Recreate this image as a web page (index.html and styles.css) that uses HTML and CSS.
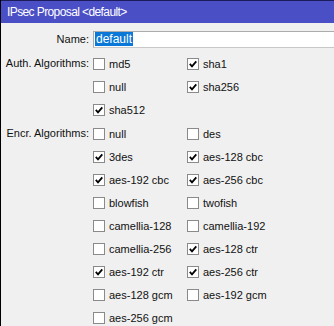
FILE: index.html
```html
<!DOCTYPE html>
<html lang="en">
<head>
    <meta charset="UTF-8">
    <meta name="viewport" content="width=device-width, initial-scale=1.0">
    <title>IPsec Proposal</title>
    <link rel="stylesheet" href="styles.css">
</head>
<body>
    <div class="window">
        <div class="titlebar">IPsec Proposal &lt;default&gt;</div>
        <div class="content">
            <div class="row name-row">
                <label class="label" for="name">Name:</label>
                <div class="name-field"><span class="selected">default</span></div>
            </div>

            <div class="row">
                <div class="label">Auth. Algorithms:</div>
                <div class="options">
                    <div class="opt"><span class="box"></span>md5</div>
                    <div class="opt"><span class="box on"></span>sha1</div>
                    <div class="opt"><span class="box"></span>null</div>
                    <div class="opt"><span class="box on"></span>sha256</div>
                    <div class="opt"><span class="box on"></span>sha512</div>
                </div>
            </div>

            <div class="row encr">
                <div class="label">Encr. Algorithms:</div>
                <div class="options">
                    <div class="opt"><span class="box"></span>null</div>
                    <div class="opt"><span class="box"></span>des</div>
                    <div class="opt"><span class="box on"></span>3des</div>
                    <div class="opt"><span class="box on"></span>aes-128 cbc</div>
                    <div class="opt"><span class="box on"></span>aes-192 cbc</div>
                    <div class="opt"><span class="box on"></span>aes-256 cbc</div>
                    <div class="opt"><span class="box"></span>blowfish</div>
                    <div class="opt"><span class="box"></span>twofish</div>
                    <div class="opt"><span class="box"></span>camellia-128</div>
                    <div class="opt"><span class="box"></span>camellia-192</div>
                    <div class="opt"><span class="box"></span>camellia-256</div>
                    <div class="opt"><span class="box on"></span>aes-128 ctr</div>
                    <div class="opt"><span class="box on"></span>aes-192 ctr</div>
                    <div class="opt"><span class="box on"></span>aes-256 ctr</div>
                    <div class="opt"><span class="box"></span>aes-128 gcm</div>
                    <div class="opt"><span class="box"></span>aes-192 gcm</div>
                    <div class="opt"><span class="box"></span>aes-256 gcm</div>
                </div>
            </div>
        </div>
    </div>
</body>
</html>
```

FILE: styles.css
```css
body {
    margin: 0;
    background-color: #f0f0f0;
    font-family: "Liberation Sans", Arial, sans-serif;
    font-size: 11px;
    color: #111;
    overflow: hidden;
}

.window {
    border-left: 1px solid #000;
    height: 100vh;
}

.titlebar {
    height: 22px;
    line-height: 22px;
    border-top: 1px solid #1c1c5a;
    background-color: #4b4fc6;
    color: #fff;
    padding-left: 6px;
    font-size: 12px;
    letter-spacing: -0.6px;
}

.content {
    padding-top: 5px;
}

.row {
    display: grid;
    grid-template-columns: 88px 1fr;
    column-gap: 4px;
}

.label {
    text-align: right;
    height: 23px;
    line-height: 23px;
}

.name-row .label {
    height: 24px;
    line-height: 23px;
}

.name-field {
    height: 15px;
    margin-top: 3px;
    margin-right: -4px;
    background-color: #fff;
    border: 1px solid #acacac;
    border-bottom-color: #c8c8c8;
    padding-left: 1px;
    line-height: 15px;
}

.selected {
    background-color: #0a78d7;
    color: #fff;
    padding: 0 1px;
    font-size: 12px;
}

.encr {
    margin-top: 1px;
}

.options {
    display: grid;
    grid-template-columns: 94px 1fr;
    grid-auto-rows: 23px;
}

.opt {
    display: flex;
    align-items: center;
    gap: 4px;
    white-space: nowrap;
}

.box {
    width: 10px;
    height: 10px;
    border: 1px solid #8a8a8a;
    background-color: #fff;
    flex: none;
}

.box.on {
    background: #fff url("data:image/svg+xml,%3Csvg xmlns='http://www.w3.org/2000/svg' width='10' height='10' viewBox='0 0 10 10'%3E%3Cpath d='M1.8 4.9 L4 7.3 L8.3 2.4' fill='none' stroke='%23000' stroke-width='1.8'/%3E%3C/svg%3E") no-repeat center;
}
```
